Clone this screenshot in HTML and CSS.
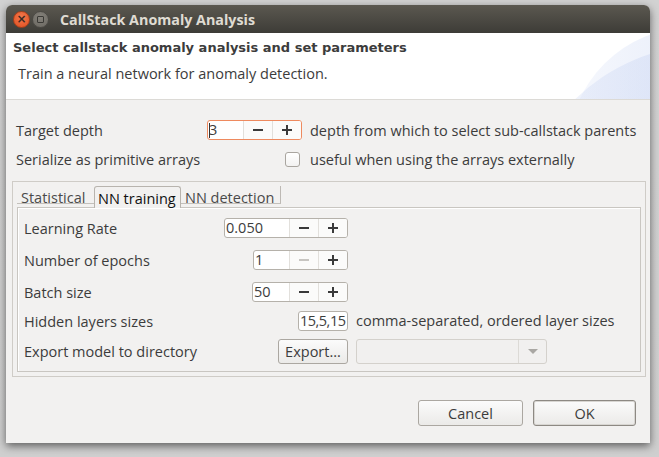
FILE: index.html
```html
<!DOCTYPE html>
<html>
<head>
<meta charset="utf-8">
<link rel="stylesheet" href="styles.css">
</head>
<body>
<div class="window">
  <div class="titlebar">
    <span class="wbtn close"><span class="x">×</span></span>
    <span class="wbtn mini"><span class="sq"></span></span>
    <span class="title">CallStack Anomaly Analysis</span>
  </div>
  <div class="header">
    <div class="h-title">Select callstack anomaly analysis and set parameters</div>
    <div class="h-desc">Train a neural network for anomaly detection.</div>
  </div>
  <div class="body">
    <div class="topgrid">
      <span class="label">Target depth</span>
      <div class="spin focus w95">
        <span class="val"><span class="caret"></span>3</span>
        <span class="sbtn"><span class="minus"></span></span>
        <span class="sbtn"><span class="plus"></span></span>
      </div>
      <span class="desc">depth from which to select sub-callstack parents</span>
      <span class="label">Serialize as primitive arrays</span>
      <span class="check"></span>
      <span class="desc">useful when using the arrays externally</span>
    </div>
    <div class="folder">
      <div class="tabs">
        <span class="tab first">Statistical</span>
        <span class="tab active">NN training</span>
        <span class="tab last">NN detection</span>
      </div>
      <div class="panel">
        <span class="label">Learning Rate</span>
        <div class="spin w124">
          <span class="val">0.050</span>
          <span class="sbtn"><span class="minus"></span></span>
          <span class="sbtn"><span class="plus"></span></span>
        </div>
        <span></span>
        <span class="label">Number of epochs</span>
        <div class="spin w95">
          <span class="val">1</span>
          <span class="sbtn"><span class="minus dis"></span></span>
          <span class="sbtn"><span class="plus"></span></span>
        </div>
        <span></span>
        <span class="label">Batch size</span>
        <div class="spin w96">
          <span class="val">50</span>
          <span class="sbtn"><span class="minus"></span></span>
          <span class="sbtn"><span class="plus"></span></span>
        </div>
        <span></span>
        <span class="label">Hidden layers sizes</span>
        <div class="text w50">15,5,15</div>
        <span class="desc">comma-separated, ordered layer sizes</span>
        <span class="label tall">Export model to directory</span>
        <span class="btn export">Export...</span>
        <div class="combo"><span class="cfield"></span><span class="carrow"><span class="tri"></span></span></div>
      </div>
    </div>
    <div class="buttons">
      <span class="btn dlg">Cancel</span>
      <span class="btn dlg ok">OK</span>
    </div>
  </div>
</div>
</body>
</html>
```

FILE: styles.css
```css
html, body {
  margin: 0;
  padding: 0;
}
body {
  width: 659px;
  height: 457px;
  overflow: hidden;
  background: linear-gradient(#d2d2d2, #cfcfcf);
  font-family: "Open Sans", "DejaVu Sans", sans-serif;
  font-size: 14.5px;
  color: #3c3c3c;
}
.window {
  margin: 5px 0 0 6px;
  width: 644px;
  height: 438px;
  background: #f2f1f0;
  border-radius: 6px 6px 0 0;
  box-shadow: 0 3px 9px rgba(0, 0, 0, 0.55);
  display: flex;
  flex-direction: column;
}
.titlebar {
  height: 28px;
  flex: none;
  border-radius: 6px 6px 0 0;
  background: linear-gradient(#5b5850, #3d3c37);
  display: flex;
  align-items: center;
  padding-left: 7px;
}
.wbtn {
  width: 17px;
  height: 17px;
  border-radius: 50%;
  box-sizing: border-box;
  display: flex;
  align-items: center;
  justify-content: center;
  margin-right: 2px;
}
.close {
  background: radial-gradient(circle at 50% 35%, #f47a4e, #df4e1f);
  border: 1px solid #a8401b;
}
.close .x {
  color: #3c2a22;
  font-family: "DejaVu Sans", sans-serif;
  font-size: 12px;
  font-weight: bold;
  line-height: 1;
  margin-top: -1px;
}
.mini {
  background: radial-gradient(circle at 50% 35%, #85827b, #6a6760);
  border: 1px solid #4c4a45;
}
.mini .sq {
  width: 7px;
  height: 7px;
  border: 1px solid #3a3935;
  border-radius: 1px;
  box-sizing: border-box;
}
.title {
  margin-left: 9px;
  color: #dfdbd2;
  font-weight: bold;
  font-size: 14.3px;
}
.header {
  height: 66px;
  flex: none;
  background: #ffffff;
  border-bottom: 1px solid #dcdad6;
  position: relative;
  overflow: hidden;
}
.header::before {
  content: "";
  position: absolute;
  left: 562px;
  top: -6px;
  width: 250px;
  height: 250px;
  border-radius: 50%;
  background: linear-gradient(to right, #f6f8fd, #e9eefa 50%, #dde5f7);
}
.header::after {
  content: "";
  position: absolute;
  left: 512px;
  top: 12px;
  width: 380px;
  height: 380px;
  border-radius: 50%;
  background: linear-gradient(to right, rgba(210, 220, 245, 0.25), rgba(200, 212, 242, 0.8));
}
.h-title, .h-desc {
  position: relative;
  z-index: 1;
}
.h-title {
  font-family: "DejaVu Sans", sans-serif;
  font-weight: bold;
  font-size: 13px;
  padding: 5px 0 0 7px;
  height: 20px;
  line-height: 20px;
}
.h-desc {
  padding: 6px 0 0 12px;
  line-height: 20px;
}
.body {
  flex: 1;
  display: flex;
  flex-direction: column;
  padding: 20px 4px 0 6px;
}
.topgrid {
  display: grid;
  grid-template-columns: 191px 95px auto;
  grid-template-rows: 20px 20px;
  row-gap: 9px;
  column-gap: 0;
  align-items: center;
  padding-left: 4px;
}
.topgrid .desc {
  padding-left: 8px;
}
.label {
  white-space: nowrap;
}
.desc {
  white-space: nowrap;
}
.spin {
  display: flex;
  height: 20px;
  box-sizing: border-box;
  border: 1px solid #b5b1aa;
  border-radius: 3px;
  background: #ffffff;
  justify-self: end;
}
.spin.focus {
  border-color: #ee8a5f;
}
.w95 { width: 95px; }
.w96 { width: 96px; }
.w124 { width: 124px; }
.w50 { width: 50px; }
.spin .val {
  flex: 1;
  line-height: 18px;
  padding-left: 1px;
  display: flex;
  align-items: center;
}
.caret {
  width: 1px;
  height: 15px;
  background: #333;
  margin-right: -1px;
}
.sbtn {
  width: 28px;
  border-left: 1px solid #e2e0dc;
  display: flex;
  align-items: center;
  justify-content: center;
  background: #fbfbfa;
}
.sbtn:last-child {
  border-radius: 0 2px 2px 0;
}
.minus, .plus {
  position: relative;
  width: 10px;
  height: 2px;
  background: #3a3a3a;
}
.minus.dis {
  background: #c7c5c1;
}
.plus::after {
  content: "";
  position: absolute;
  left: 4px;
  top: -4px;
  width: 2px;
  height: 10px;
  background: #3a3a3a;
}
.check {
  width: 15px;
  height: 15px;
  box-sizing: border-box;
  border: 1px solid #a9a59f;
  border-radius: 3px;
  background: linear-gradient(#ffffff, #f3f2f1);
  justify-self: end;
  margin-right: 2px;
}
.folder {
  margin-top: 12px;
  width: 634px;
  height: 196px;
  box-sizing: border-box;
  border: 1px solid #cfccc7;
  padding: 4px;
  display: flex;
  flex-direction: column;
}
.tabs {
  display: flex;
  align-items: flex-end;
  height: 21px;
  flex: none;
}
.tab {
  height: 18px;
  line-height: 24px;
  box-sizing: border-box;
  white-space: nowrap;
  color: #4a4a4a;
  border-bottom: 1px solid #c3c0bb;
  margin-bottom: 3px;
  overflow: visible;
}
.tab.first {
  padding: 0 5px 0 4px;
  width: 77px;
}
.tab.last {
  padding: 0 4px 0 4px;
  border-right: 1px solid #bdb9b4;
  width: 100px;
}
.tab.active {
  height: 22px;
  line-height: 23px;
  margin-bottom: -1px;
  width: 87px;
  background: #f2f1f0;
  border: 1px solid #b8b4ae;
  border-bottom: none;
  border-radius: 3px 3px 0 0;
  color: #111111;
  padding: 0 0 0 3px;
  position: relative;
  z-index: 1;
}
.panel {
  flex: 1;
  border: 1px solid #c9c6c1;
  box-shadow: inset 1px 1px 0 #ffffff;
  box-sizing: border-box;
  display: grid;
  grid-template-columns: 199px 125px auto;
  grid-template-rows: 32px 32px 29px 28px 25px;
  align-items: start;
  padding: 10px 0 0 6px;
}
.panel .label {
  height: 20px;
  line-height: 21px;
}
.panel .label.tall {
  height: 25px;
  line-height: 25px;
}
.panel .desc {
  padding-left: 8px;
  line-height: 20px;
}
.text {
  height: 20px;
  box-sizing: border-box;
  border: 1px solid #b5b1aa;
  border-radius: 3px;
  background: #fff;
  justify-self: end;
  line-height: 18px;
  padding-left: 1px;
  white-space: nowrap;
  overflow: hidden;
  letter-spacing: -0.5px;
}
.btn {
  box-sizing: border-box;
  border: 1px solid #aba7a1;
  border-radius: 3px;
  background: linear-gradient(#fbfbfb, #ebeae8);
  display: flex;
  align-items: center;
  justify-content: center;
  white-space: nowrap;
}
.export {
  width: 70px;
  height: 25px;
  justify-self: end;
}
.combo {
  margin-left: 8px;
  width: 191px;
  height: 25px;
  box-sizing: border-box;
  border: 1px solid #d4d1cc;
  border-radius: 3px;
  background: #f1f0ef;
  display: flex;
}
.cfield {
  flex: 1;
}
.carrow {
  width: 27px;
  border-left: 1px solid #dcdad6;
  display: flex;
  align-items: center;
  justify-content: center;
}
.tri {
  width: 0;
  height: 0;
  border-left: 5px solid transparent;
  border-right: 5px solid transparent;
  border-top: 5px solid #a9a7a3;
}
.buttons {
  display: flex;
  justify-content: flex-end;
  gap: 10px;
  margin-top: 23px;
  padding-right: 10px;
}
.dlg {
  width: 105px;
  height: 26px;
}
.ok {
  width: 103px;
  border-color: #8d8983;
  box-shadow: inset 0 0 0 1px #d8d6d2;
}
```
